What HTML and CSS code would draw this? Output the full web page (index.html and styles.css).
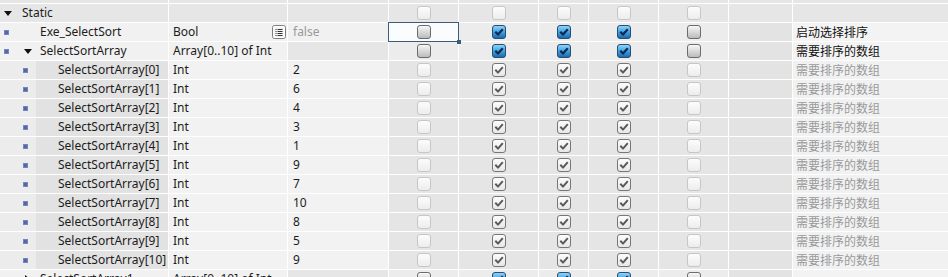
FILE: index.html
```html
<!DOCTYPE html>
<html lang="zh">
<head>
<meta charset="utf-8">
<link rel="stylesheet" href="styles.css">
</head>
<body>
<svg class="defs" width="0" height="0" aria-hidden="true">
  <defs>
    <linearGradient id="g-blue" x1="0" y1="0" x2="0" y2="1">
      <stop offset="0" stop-color="#9ad6f7"/>
      <stop offset="0.45" stop-color="#45a9e6"/>
      <stop offset="1" stop-color="#1766ad"/>
    </linearGradient>
    <linearGradient id="g-gray" x1="0" y1="0" x2="0" y2="1">
      <stop offset="0" stop-color="#fbfbfb"/>
      <stop offset="0.45" stop-color="#dcdcdc"/>
      <stop offset="1" stop-color="#b9b9b9"/>
    </linearGradient>
    <linearGradient id="g-dis" x1="0" y1="0" x2="0" y2="1">
      <stop offset="0" stop-color="#fdfdfd"/>
      <stop offset="1" stop-color="#ececec"/>
    </linearGradient>
    <linearGradient id="g-chk" x1="0" y1="0" x2="0" y2="1">
      <stop offset="0" stop-color="#fdfdfd"/>
      <stop offset="1" stop-color="#e6e6e6"/>
    </linearGradient>
    <symbol id="cb-blue" viewBox="0 0 14 14">
      <rect x="0.5" y="0.5" width="13" height="13" rx="2.5" fill="url(#g-blue)" stroke="#2b4c72"/>
      <path d="M3.3 6.8 L6 9.6 L10.8 4.2" fill="none" stroke="#0d2850" stroke-width="2.2" stroke-linejoin="round"/>
    </symbol>
    <symbol id="cb-grayck" viewBox="0 0 14 14">
      <rect x="0.5" y="0.5" width="13" height="13" rx="2.5" fill="url(#g-chk)" stroke="#767676"/>
      <path d="M3.3 6.8 L6 9.6 L10.8 4.2" fill="none" stroke="#5a5a5a" stroke-width="2" stroke-linejoin="round"/>
    </symbol>
    <symbol id="cb-off" viewBox="0 0 14 14">
      <rect x="0.5" y="0.5" width="13" height="13" rx="2.5" fill="url(#g-gray)" stroke="#6c6c6c"/>
    </symbol>
    <symbol id="cb-dis" viewBox="0 0 14 14">
      <rect x="0.5" y="0.5" width="13" height="13" rx="2.5" fill="url(#g-dis)" stroke="#c6c6c6"/>
    </symbol>
  </defs>
</svg>

<div class="table">
  <div class="row stub r-static">
    <div class="c"></div><div class="c"></div><div class="c"></div><div class="c"></div><div class="c"></div><div class="c"></div><div class="c"></div><div class="c"></div><div class="c"></div><div class="c"></div>
  </div>

  <!-- Static -->
  <div class="row r-static">
    <div class="c name"><span class="tri down l0"></span><span class="txt t-static">Static</span></div>
    <div class="c type"></div>
    <div class="c val"></div>
    <div class="c cb"><svg class="box"><use href="#cb-dis"/></svg></div>
    <div class="c cb"><svg class="box"><use href="#cb-dis"/></svg></div>
    <div class="c cb"><svg class="box"><use href="#cb-dis"/></svg></div>
    <div class="c cb"><svg class="box"><use href="#cb-dis"/></svg></div>
    <div class="c cb"><svg class="box"><use href="#cb-dis"/></svg></div>
    <div class="c x9"></div>
    <div class="c cmt"></div>
  </div>

  <!-- Exe_SelectSort -->
  <div class="row r-top">
    <div class="c name"><span class="bul b0"></span><span class="txt t-l1">Exe_SelectSort</span></div>
    <div class="c type"><span class="grow">Bool</span><svg class="lst" viewBox="0 0 14 14"><rect x="0.5" y="0.5" width="13" height="13" rx="2" fill="#f4f4f4" stroke="#7d7d7d"/><rect x="1.5" y="1.5" width="11" height="11" rx="1" fill="none" stroke="#ffffff"/><path d="M3.5 4.5h1M3.5 6.5h1M3.5 8.5h1M3.5 10.5h1M5.5 4.5h5M5.5 6.5h5M5.5 8.5h5M5.5 10.5h5" stroke="#333" stroke-width="1"/></svg></div>
    <div class="c val"><span class="muted">false</span></div>
    <div class="c cb sel"><svg class="box"><use href="#cb-off"/></svg></div>
    <div class="c cb"><svg class="box"><use href="#cb-blue"/></svg></div>
    <div class="c cb"><svg class="box"><use href="#cb-blue"/></svg></div>
    <div class="c cb"><svg class="box"><use href="#cb-blue"/></svg></div>
    <div class="c cb"><svg class="box"><use href="#cb-off"/></svg></div>
    <div class="c x9"></div>
    <div class="c cmt">启动选择排序</div>
  </div>

  <!-- SelectSortArray -->
  <div class="row r-top r-arr">
    <div class="c name"><span class="bul b0"></span><span class="tri down l1"></span><span class="txt t-l1b">SelectSortArray</span></div>
    <div class="c type">Array[0..10] of Int</div>
    <div class="c val"></div>
    <div class="c cb"><svg class="box"><use href="#cb-off"/></svg></div>
    <div class="c cb"><svg class="box"><use href="#cb-blue"/></svg></div>
    <div class="c cb"><svg class="box"><use href="#cb-blue"/></svg></div>
    <div class="c cb"><svg class="box"><use href="#cb-blue"/></svg></div>
    <div class="c cb"><svg class="box"><use href="#cb-off"/></svg></div>
    <div class="c x9"></div>
    <div class="c cmt">需要排序的数组</div>
  </div>

  <div class="row r-elem">
    <div class="c name"><span class="bul b1"></span><span class="txt t-l2">SelectSortArray[0]</span></div>
    <div class="c type">Int</div><div class="c val">2</div>
    <div class="c cb"><svg class="box"><use href="#cb-dis"/></svg></div>
    <div class="c cb"><svg class="box"><use href="#cb-grayck"/></svg></div>
    <div class="c cb"><svg class="box"><use href="#cb-grayck"/></svg></div>
    <div class="c cb"><svg class="box"><use href="#cb-grayck"/></svg></div>
    <div class="c cb"><svg class="box"><use href="#cb-dis"/></svg></div>
    <div class="c x9"></div><div class="c cmt muted">需要排序的数组</div>
  </div>
  <div class="row r-elem">
    <div class="c name"><span class="bul b1"></span><span class="txt t-l2">SelectSortArray[1]</span></div>
    <div class="c type">Int</div><div class="c val">6</div>
    <div class="c cb"><svg class="box"><use href="#cb-dis"/></svg></div>
    <div class="c cb"><svg class="box"><use href="#cb-grayck"/></svg></div>
    <div class="c cb"><svg class="box"><use href="#cb-grayck"/></svg></div>
    <div class="c cb"><svg class="box"><use href="#cb-grayck"/></svg></div>
    <div class="c cb"><svg class="box"><use href="#cb-dis"/></svg></div>
    <div class="c x9"></div><div class="c cmt muted">需要排序的数组</div>
  </div>
  <div class="row r-elem">
    <div class="c name"><span class="bul b1"></span><span class="txt t-l2">SelectSortArray[2]</span></div>
    <div class="c type">Int</div><div class="c val">4</div>
    <div class="c cb"><svg class="box"><use href="#cb-dis"/></svg></div>
    <div class="c cb"><svg class="box"><use href="#cb-grayck"/></svg></div>
    <div class="c cb"><svg class="box"><use href="#cb-grayck"/></svg></div>
    <div class="c cb"><svg class="box"><use href="#cb-grayck"/></svg></div>
    <div class="c cb"><svg class="box"><use href="#cb-dis"/></svg></div>
    <div class="c x9"></div><div class="c cmt muted">需要排序的数组</div>
  </div>
  <div class="row r-elem">
    <div class="c name"><span class="bul b1"></span><span class="txt t-l2">SelectSortArray[3]</span></div>
    <div class="c type">Int</div><div class="c val">3</div>
    <div class="c cb"><svg class="box"><use href="#cb-dis"/></svg></div>
    <div class="c cb"><svg class="box"><use href="#cb-grayck"/></svg></div>
    <div class="c cb"><svg class="box"><use href="#cb-grayck"/></svg></div>
    <div class="c cb"><svg class="box"><use href="#cb-grayck"/></svg></div>
    <div class="c cb"><svg class="box"><use href="#cb-dis"/></svg></div>
    <div class="c x9"></div><div class="c cmt muted">需要排序的数组</div>
  </div>
  <div class="row r-elem">
    <div class="c name"><span class="bul b1"></span><span class="txt t-l2">SelectSortArray[4]</span></div>
    <div class="c type">Int</div><div class="c val">1</div>
    <div class="c cb"><svg class="box"><use href="#cb-dis"/></svg></div>
    <div class="c cb"><svg class="box"><use href="#cb-grayck"/></svg></div>
    <div class="c cb"><svg class="box"><use href="#cb-grayck"/></svg></div>
    <div class="c cb"><svg class="box"><use href="#cb-grayck"/></svg></div>
    <div class="c cb"><svg class="box"><use href="#cb-dis"/></svg></div>
    <div class="c x9"></div><div class="c cmt muted">需要排序的数组</div>
  </div>
  <div class="row r-elem">
    <div class="c name"><span class="bul b1"></span><span class="txt t-l2">SelectSortArray[5]</span></div>
    <div class="c type">Int</div><div class="c val">9</div>
    <div class="c cb"><svg class="box"><use href="#cb-dis"/></svg></div>
    <div class="c cb"><svg class="box"><use href="#cb-grayck"/></svg></div>
    <div class="c cb"><svg class="box"><use href="#cb-grayck"/></svg></div>
    <div class="c cb"><svg class="box"><use href="#cb-grayck"/></svg></div>
    <div class="c cb"><svg class="box"><use href="#cb-dis"/></svg></div>
    <div class="c x9"></div><div class="c cmt muted">需要排序的数组</div>
  </div>
  <div class="row r-elem">
    <div class="c name"><span class="bul b1"></span><span class="txt t-l2">SelectSortArray[6]</span></div>
    <div class="c type">Int</div><div class="c val">7</div>
    <div class="c cb"><svg class="box"><use href="#cb-dis"/></svg></div>
    <div class="c cb"><svg class="box"><use href="#cb-grayck"/></svg></div>
    <div class="c cb"><svg class="box"><use href="#cb-grayck"/></svg></div>
    <div class="c cb"><svg class="box"><use href="#cb-grayck"/></svg></div>
    <div class="c cb"><svg class="box"><use href="#cb-dis"/></svg></div>
    <div class="c x9"></div><div class="c cmt muted">需要排序的数组</div>
  </div>
  <div class="row r-elem">
    <div class="c name"><span class="bul b1"></span><span class="txt t-l2">SelectSortArray[7]</span></div>
    <div class="c type">Int</div><div class="c val">10</div>
    <div class="c cb"><svg class="box"><use href="#cb-dis"/></svg></div>
    <div class="c cb"><svg class="box"><use href="#cb-grayck"/></svg></div>
    <div class="c cb"><svg class="box"><use href="#cb-grayck"/></svg></div>
    <div class="c cb"><svg class="box"><use href="#cb-grayck"/></svg></div>
    <div class="c cb"><svg class="box"><use href="#cb-dis"/></svg></div>
    <div class="c x9"></div><div class="c cmt muted">需要排序的数组</div>
  </div>
  <div class="row r-elem">
    <div class="c name"><span class="bul b1"></span><span class="txt t-l2">SelectSortArray[8]</span></div>
    <div class="c type">Int</div><div class="c val">8</div>
    <div class="c cb"><svg class="box"><use href="#cb-dis"/></svg></div>
    <div class="c cb"><svg class="box"><use href="#cb-grayck"/></svg></div>
    <div class="c cb"><svg class="box"><use href="#cb-grayck"/></svg></div>
    <div class="c cb"><svg class="box"><use href="#cb-grayck"/></svg></div>
    <div class="c cb"><svg class="box"><use href="#cb-dis"/></svg></div>
    <div class="c x9"></div><div class="c cmt muted">需要排序的数组</div>
  </div>
  <div class="row r-elem">
    <div class="c name"><span class="bul b1"></span><span class="txt t-l2">SelectSortArray[9]</span></div>
    <div class="c type">Int</div><div class="c val">5</div>
    <div class="c cb"><svg class="box"><use href="#cb-dis"/></svg></div>
    <div class="c cb"><svg class="box"><use href="#cb-grayck"/></svg></div>
    <div class="c cb"><svg class="box"><use href="#cb-grayck"/></svg></div>
    <div class="c cb"><svg class="box"><use href="#cb-grayck"/></svg></div>
    <div class="c cb"><svg class="box"><use href="#cb-dis"/></svg></div>
    <div class="c x9"></div><div class="c cmt muted">需要排序的数组</div>
  </div>
  <div class="row r-elem">
    <div class="c name"><span class="bul b1"></span><span class="txt t-l2">SelectSortArray[10]</span></div>
    <div class="c type">Int</div><div class="c val">9</div>
    <div class="c cb"><svg class="box"><use href="#cb-dis"/></svg></div>
    <div class="c cb"><svg class="box"><use href="#cb-grayck"/></svg></div>
    <div class="c cb"><svg class="box"><use href="#cb-grayck"/></svg></div>
    <div class="c cb"><svg class="box"><use href="#cb-grayck"/></svg></div>
    <div class="c cb"><svg class="box"><use href="#cb-dis"/></svg></div>
    <div class="c x9"></div><div class="c cmt muted">需要排序的数组</div>
  </div>

  <!-- SelectSortArray1 (partially visible) -->
  <div class="row r-top r-arr">
    <div class="c name"><span class="bul b0"></span><span class="tri right l1"></span><span class="txt t-l1c">SelectSortArray1</span></div>
    <div class="c type">Array[0..10] of Int</div>
    <div class="c val"></div>
    <div class="c cb"><svg class="box"><use href="#cb-off"/></svg></div>
    <div class="c cb"><svg class="box"><use href="#cb-blue"/></svg></div>
    <div class="c cb"><svg class="box"><use href="#cb-blue"/></svg></div>
    <div class="c cb"><svg class="box"><use href="#cb-blue"/></svg></div>
    <div class="c cb"><svg class="box"><use href="#cb-off"/></svg></div>
    <div class="c x9"></div>
    <div class="c cmt"></div>
  </div>
</div>
</body>
</html>
```

FILE: styles.css
```css
html, body {
  margin: 0;
  padding: 0;
  background: #ffffff;
}

body {
  width: 948px;
  height: 277px;
  overflow: hidden;
  font-family: "Noto Sans", "Noto Sans CJK SC", sans-serif;
  font-size: 12px;
  color: #1c1c1c;
}

.defs {
  position: absolute;
  width: 0;
  height: 0;
}

.table {
  display: flex;
  flex-direction: column;
  gap: 1px;
  background: #ffffff;
}

.row {
  display: grid;
  grid-template-columns: 168px 118px 100px 69px 79px 49px 69px 69px 63px 1fr;
  column-gap: 1px;
  height: 18px;
  flex: none;
}

.row.stub {
  height: 3px;
}

.c {
  display: flex;
  align-items: center;
  min-width: 0;
  white-space: nowrap;
  overflow: hidden;
  line-height: 16px;
}

.cb {
  justify-content: center;
}

.box {
  width: 14px;
  height: 14px;
  flex: none;
}

/* name column pieces */
.tri {
  flex: none;
  width: 0;
  height: 0;
}
.tri.down {
  border-left: 4px solid transparent;
  border-right: 4px solid transparent;
  border-top: 5px solid #111111;
}
.tri.right {
  border-top: 4px solid transparent;
  border-bottom: 4px solid transparent;
  border-left: 5px solid #111111;
}
.tri.l0 { margin-left: 4px; }
.tri.l1 { margin-left: 15px; }
.tri.right.l1 { margin-left: 16px; }

.bul {
  flex: none;
  width: 5px;
  height: 5px;
  background: #5467a8;
  box-shadow: inset 0 0 0 1px #7585be;
}
.bul.b0 { margin-left: 4px; }
.bul.b1 { margin-left: 23px; }

.txt { flex: none; }
.t-static { margin-left: 10px; }
.t-l1 { margin-left: 31px; }
.t-l1b { margin-left: 8px; }
.t-l1c { margin-left: 10px; }
.t-l2 { margin-left: 30px; }

.type { padding-left: 4px; }
.val { padding-left: 5px; }
.cmt {
  padding-left: 3px;
  font-family: "Noto Sans CJK SC", "Noto Sans", sans-serif;
  color: #111111;
}

.grow { flex: 1; }

.lst {
  width: 14px;
  height: 14px;
  flex: none;
  margin-right: 1px;
}

.muted,
.cmt.muted {
  color: #9a9a9a;
}

/* row backgrounds */
.r-static .c { background: #e6e6e6; }

.r-top .c { background: #f1f1f1; }
.r-top .cb { background: #ececec; }
.r-top .x9 { background: #e3e3e3; }
.r-top .cmt { background: #f3f3f3; }
.r-arr .val { background: #e6e6e6; }

.r-elem .c { background: #f2f2f2; }
.r-elem .name { background: linear-gradient(to right, #ececec 36px, #e2e2e2 36px); }
.r-elem .cb { background: #e5e5e5; }
.r-elem .x9 { background: #e3e3e3; }
.r-elem .cmt { background: #f1f1f1; }

/* selected cell */
.r-top .sel {
  position: relative;
  z-index: 1;
  overflow: visible;
  background: #fbfcfe;
  outline: 1px solid #3d5b7a;
}
.sel::after {
  content: "";
  position: absolute;
  right: -3px;
  bottom: -3px;
  width: 4px;
  height: 4px;
  background: #3d5b7a;
}
```
